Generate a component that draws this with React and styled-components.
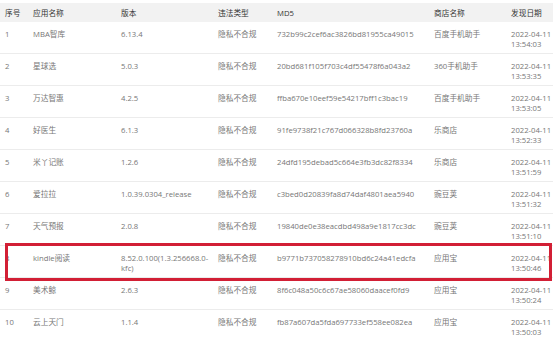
import styled, { createGlobalStyle } from 'styled-components';

const GlobalStyle = createGlobalStyle`
    html, body {
        margin: 0;
        padding: 0;
        background: #fff;
    }
    body {
        font-family: "Open Sans", "Noto Sans CJK SC", sans-serif;
    }
`;

const rows = [
    ['1', 'MBA智库', '6.13.4', '732b99c2cef6ac3826bd81955ca49015', '百度手机助手', '13:54:03'],
    ['2', '星球选', '5.0.3', '20bd681f105f703c4df55478f6a043a2', '360手机助手', '13:53:35'],
    ['3', '万达智惠', '4.2.5', 'ffba670e10eef59e54217bff1c3bac19', '百度手机助手', '13:53:05'],
    ['4', '好医生', '6.1.3', '91fe9738f21c767d066328b8fd23760a', '乐商店', '13:52:33'],
    ['5', '米丫记账', '1.2.6', '24dfd195debad5c664e3fb3dc82f8334', '乐商店', '13:51:59'],
    ['6', '爱拉拉', '1.0.39.0304_release', 'c3bed0d20839fa8d74daf4801aea5940', '豌豆荚', '13:51:32'],
    ['7', '天气预报', '2.0.8', '19840de0e38eacdbd498a9e1817cc3dc', '豌豆荚', '13:51:10'],
    ['8', 'kindle阅读', '8.52.0.100(1.3.256668.0-kfc)', 'b9771b737058278910bd6c24a41edcfa', '应用宝', '13:50:46'],
    ['9', '美术鲸', '2.6.3', '8f6c048a50c6c67ae58060daacef0fd9', '应用宝', '13:50:24'],
    ['10', '云上天门', '1.1.4', 'fb87a607da5fda697733ef558ee082ea', '应用宝', '13:50:03'],
];

const App = () => {
    return (
        <>
            <GlobalStyle />
            <Table>
                <HeadRow>
                    <Cell>序号</Cell>
                    <Cell>应用名称</Cell>
                    <Cell>版本</Cell>
                    <Cell>违法类型</Cell>
                    <Cell>MD5</Cell>
                    <Cell>商店名称</Cell>
                    <Cell>发现日期</Cell>
                </HeadRow>
                {rows.map(([no, name, version, md5, store, time]) => (
                    <Row key={no} $highlight={no === '8'}>
                        <Cell>{no}</Cell>
                        <Cell>{name}</Cell>
                        <Cell>{version}</Cell>
                        <Cell>隐私不合规</Cell>
                        <Cell>{md5}</Cell>
                        <Cell>{store}</Cell>
                        <DateCell>
                            <span>2022-04-11</span>
                            <span>{time}</span>
                        </DateCell>
                    </Row>
                ))}
            </Table>
        </>
    );
};

const Table = styled.div`
    padding-top: 3px;
    width: 553px;
    font-size: 7.7px;
    line-height: 10px;
    overflow: hidden;
`;

const grid = `
    display: grid;
    grid-template-columns: 28px 88px 97px 59px 157px 77px 1fr;
    padding-left: 5px;
`;

const HeadRow = styled.div`
    ${grid}
    height: 19px;
    align-items: center;
    background-color: #f2f2f2;
    color: #333;
`;

const Row = styled.div`
    ${grid}
    position: relative;
    height: 32px;
    box-sizing: border-box;
    padding-top: 7px;
    border-bottom: 1px solid #ececec;
    color: #777;

    &::after {
        content: '';
        display: ${(p) => (p.$highlight ? 'block' : 'none')};
        position: absolute;
        top: -3px;
        bottom: -4px;
        left: 5px;
        right: 1px;
        border: 3px solid #d21f35;
    }
`;

const Cell = styled.div`
    min-width: 0;
    padding-right: 4px;
    white-space: normal;
`;

const DateCell = styled.div`
    display: flex;
    flex-direction: column;
    white-space: nowrap;
`;

export default App;
